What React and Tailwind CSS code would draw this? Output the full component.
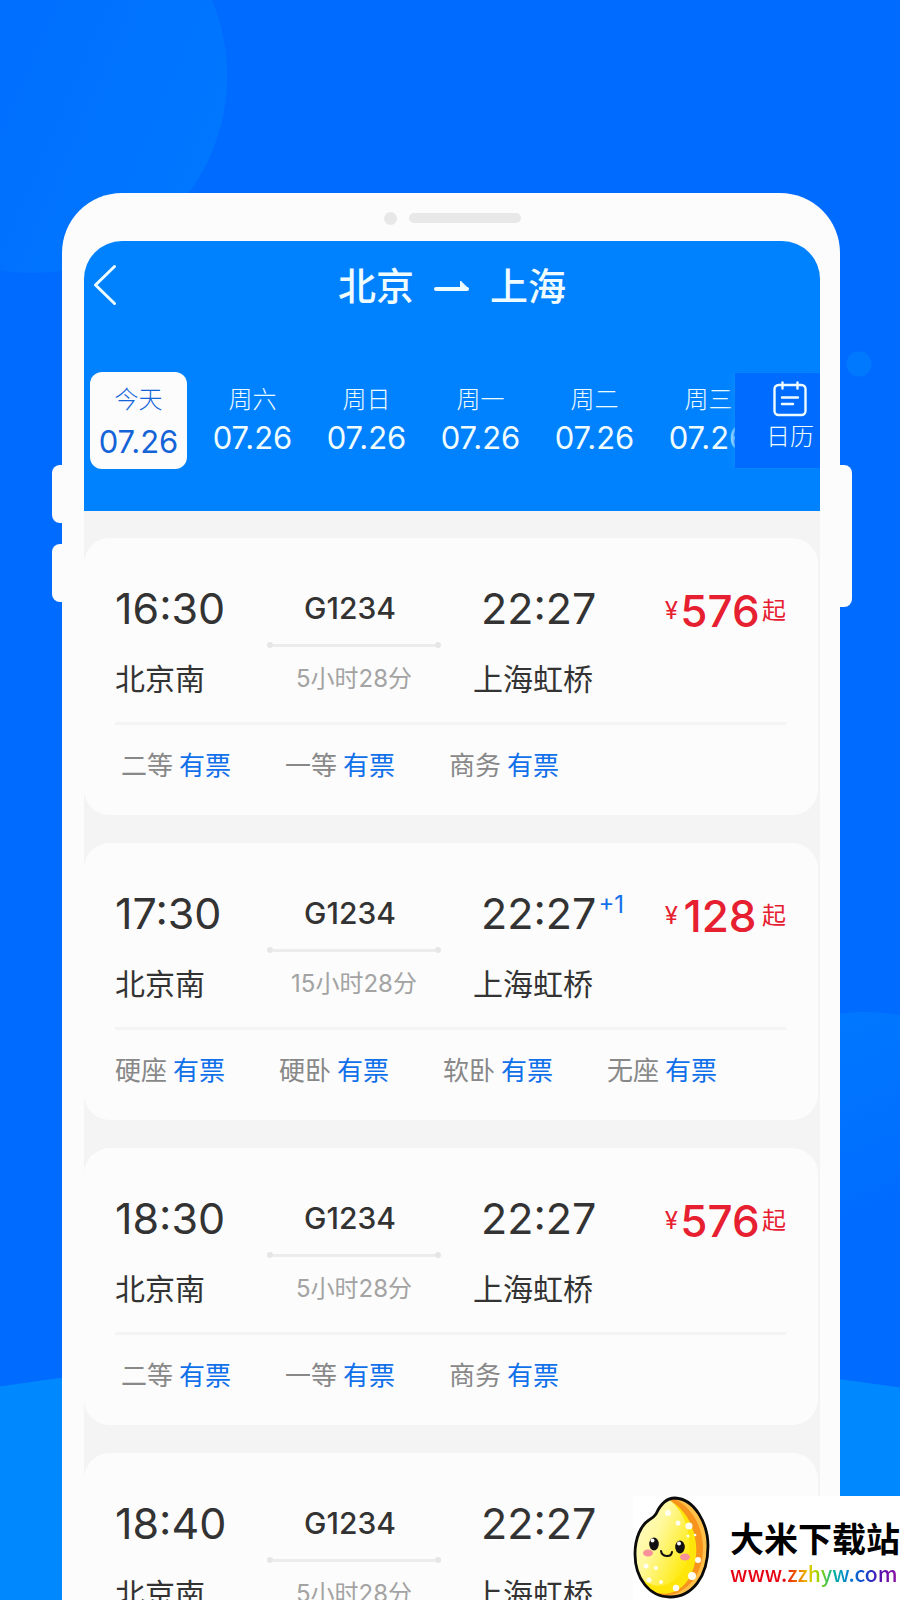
// src/pages/TrainList.jsx
import React, { useState } from 'react';

const days = [
  { id: 0, label: '今天', date: '07.26' },
  { id: 1, label: '周六', date: '07.26' },
  { id: 2, label: '周日', date: '07.26' },
  { id: 3, label: '周一', date: '07.26' },
  { id: 4, label: '周二', date: '07.26' },
  { id: 5, label: '周三', date: '07.26' },
];

const trains = [
  { depart: '16:30', arrive: '22:27', no: 'G1234', duration: '5小时28分', price: 576, seats: ['二等', '一等', '商务'] },
  { depart: '17:30', arrive: '22:27', plus: '+1', no: 'G1234', duration: '15小时28分', price: 128, seats: ['硬座', '硬卧', '软卧', '无座'] },
  { depart: '18:30', arrive: '22:27', no: 'G1234', duration: '5小时28分', price: 576, seats: ['二等', '一等', '商务'] },
  { depart: '18:40', arrive: '22:27', no: 'G1234', duration: '5小时28分', seats: ['二等', '一等', '商务'] },
];

// Soft circles behind the phone
const Backdrop = () => (
  <svg className="absolute inset-0 w-full h-full" viewBox="0 0 900 1600" preserveAspectRatio="none" aria-hidden="true">
    <defs>
      <linearGradient id="topGlow" x1="0.3" y1="0.3" x2="1" y2="0.6">
        <stop offset="0" stopColor="#006cff" />
        <stop offset="1" stopColor="#0077ff" />
      </linearGradient>
      <linearGradient id="sideGlow" x1="0.3" y1="0" x2="0.5" y2="0.5">
        <stop offset="0" stopColor="#0079ff" />
        <stop offset="1" stopColor="#006cff" />
      </linearGradient>
    </defs>
    <circle cx="30" cy="76" r="197" fill="url(#topGlow)" />
    <circle cx="859" cy="364" r="12.5" fill="#0079ff" />
    <circle cx="865" cy="1212" r="200" fill="url(#sideGlow)" />
    <circle cx="446" cy="4350" r="2997" fill="#0088ff" />
  </svg>
);

const CalendarIcon = () => (
  <svg className="w-9 h-9" viewBox="0 0 36 36" fill="none" stroke="currentColor" strokeWidth="2.4" strokeLinecap="round" aria-hidden="true">
    <path d="M10.500 4H6.500a4 4 0 0 0-4 4v22a4 4 0 0 0 4 4h23a4 4 0 0 0 4-4V8a4 4 0 0 0-4-4h-4M10.500 4h15" />
    <path d="M10.500 1.500v6M25.500 1.500v6M10 16.500h16M10 23h11" />
  </svg>
);

const Header = () => {
  const [active, setActive] = useState(0);

  return (
    <header className="h-[270px] bg-[#0082ff] text-[#effcff]">
      <div className="grid grid-cols-[60px_1fr_60px] items-center pt-[22px]">
        <button type="button" aria-label="返回" className="pl-2.5">
          <svg className="w-6 h-11" viewBox="0 0 24 44" fill="none" stroke="currentColor" strokeWidth="3" strokeLinecap="round" strokeLinejoin="round" aria-hidden="true">
            <path d="M20.500 2.500 1.500 21l19 18.500" />
          </svg>
        </button>
        <h1 className="flex items-center justify-center gap-5 text-[38px] leading-[46px] font-medium">
          <span>北京</span>
          <svg className="w-9 h-4" viewBox="0 0 36 16" aria-hidden="true">
            <path d="M2 11h31" stroke="currentColor" strokeWidth="4" strokeLinecap="round" />
            <path d="M26.500 3v8H34.500z" fill="currentColor" stroke="currentColor" strokeWidth="1" strokeLinejoin="round" />
          </svg>
          <span>上海</span>
        </h1>
      </div>

      <div className="relative mt-[63px] overflow-hidden">
        <div className="flex gap-[17px] pl-1.5">
          {days.map((day) => (
            <button
              key={day.id}
              type="button"
              onClick={() => setActive(day.id)}
              className={
                active === day.id
                  ? 'shrink-0 w-[97px] h-[97px] rounded-xl bg-[#fcfcfc] text-[#1464d8] flex flex-col items-center pt-4'
                  : 'shrink-0 w-[97px] h-[97px] flex flex-col items-center pt-4'
              }
            >
              <span className="text-2xl leading-6 font-light">{day.label}</span>
              <span className={active === day.id ? 'mt-3.5 text-[31px] leading-8' : 'mt-2.5 text-[31px] leading-8'}>
                {day.date}
              </span>
            </button>
          ))}
        </div>
        <button
          type="button"
          className="absolute right-0 top-px w-[85px] h-[95px] pl-[25px] pt-2 bg-[#006cff] flex flex-col items-center shadow-[-2px_0_8px_#0a8cff]"
        >
          <CalendarIcon />
          <span className="mt-2 text-2xl leading-6 font-light">日历</span>
        </button>
      </div>
    </header>
  );
};

const TrainCard = ({ train }) => (
  <li className="mr-0.5 h-[277px] rounded-[26px] bg-[#fcfcfc] pl-[31px] pr-8 pt-12 text-[#333333]">
    <div className="flex">
      <div className="w-[152px]">
        <p className="text-[43px] leading-[44px]">{train.depart}</p>
        <p className="mt-[34px] text-3xl leading-[30px]">北京南</p>
      </div>
      <div className="w-[174px] flex flex-col items-center">
        <p className="pr-2 text-3xl leading-[44px] font-medium">{train.no}</p>
        <div className="mt-3 w-full flex items-center" aria-hidden="true">
          <span className="w-1.5 h-1.5 rounded-full bg-[#e6e6e6]" />
          <span className="flex-1 h-[3px] bg-[#ececec]" />
          <span className="w-1.5 h-1.5 rounded-full bg-[#e6e6e6]" />
        </div>
        <p className="mt-4 text-2xl leading-[30px] text-[#a3a3a3]">{train.duration}</p>
      </div>
      <div className="ml-8 flex-1">
        <p className="flex pl-2 text-[43px] leading-[44px]">
          {train.arrive}
          {train.plus && <sup className="top-0 pl-0.5 text-2xl leading-7 text-[#1470ea]">{train.plus}</sup>}
        </p>
        <p className="mt-[34px] text-3xl leading-[30px]">上海虹桥</p>
      </div>
      {train.price && (
        <p className="flex h-[50px] items-center text-2xl text-[#e62030]">
          ¥
          <span className="w-[84px] text-center text-[44px] leading-[50px] font-medium">{train.price}</span>
          起
        </p>
      )}
    </div>

    <ul className={train.seats.length < 4 ? 'mt-7 border-t-3 border-[#f4f4f4] flex gap-[54px] pt-7 pl-1.5' : 'mt-7 border-t-3 border-[#f4f4f4] flex gap-[54px] pt-7'}>
      {train.seats.map((seat) => (
        <li key={seat} className="flex gap-1.5 text-[26px] leading-[26px] text-[#888888]">
          {seat}
          <a href="#book" className="text-[#1070ea]">有票</a>
        </li>
      ))}
    </ul>
  </li>
);

// Rice grain mascot
const RiceLogo = () => (
  <svg className="w-[78px] h-[104px] shrink-0" viewBox="0 0 78 104" aria-hidden="true">
    <defs>
      <linearGradient id="grain" x1="0.1" y1="0.1" x2="0.9" y2="0.8">
        <stop offset="0" stopColor="#fffcd8" />
        <stop offset="0.5" stopColor="#fff9a0" />
        <stop offset="1" stopColor="#ffea10" />
      </linearGradient>
      <clipPath id="grainShape">
        <path d="M23 18C28 7 34 2 42 2c20 1 33 26 33 48 0 31-16 51-38 51C16 101 2 82 2 58c0-16 6-29 14-34 3-2 5-3 7-6z" />
      </clipPath>
    </defs>
    <g clipPath="url(#grainShape)">
      <path d="M0 0h78v104H0z" fill="#ffc04a" />
      <path d="M42 3c16 8 28 27 28 49 0 21-9 38-28 46l-42 6V0z" fill="#f7941d" />
      <ellipse cx="28" cy="50" rx="35" ry="48" fill="#ffe60a" transform="rotate(-8 28 50)" />
      <ellipse cx="23" cy="44" rx="33" ry="46" fill="url(#grain)" transform="rotate(-8 23 44)" />
      <g fill="#fffef0">
        <circle cx="56" cy="30" r="3.5" />
        <circle cx="55" cy="40" r="1.500" />
        <circle cx="62" cy="39" r="1.300" />
        <circle cx="65" cy="64" r="3" />
        <circle cx="59" cy="80" r="4" />
        <circle cx="43" cy="92" r="3.200" />
        <circle cx="16" cy="84" r="2.500" />
        <circle cx="28" cy="86" r="2" />
        <circle cx="35" cy="17" r="3" />
        <circle cx="45" cy="27" r="2.500" />
        <circle cx="13" cy="70" r="2.500" />
        <circle cx="23" cy="72" r="2" />
      </g>
    </g>
    <path d="M23 18C28 7 34 2 42 2c20 1 33 26 33 48 0 31-16 51-38 51C16 101 2 82 2 58c0-16 6-29 14-34 3-2 5-3 7-6z" fill="none" stroke="#0b0b0b" strokeWidth="2.800" />
    <ellipse cx="15" cy="57" rx="5" ry="3.500" fill="#f9919a" />
    <ellipse cx="52" cy="61" rx="5" ry="3.500" fill="#f9919a" />
    <ellipse cx="21" cy="48" rx="4.800" ry="6.500" fill="#111111" />
    <ellipse cx="47" cy="51" rx="4.800" ry="6.500" fill="#111111" />
    <circle cx="19.500" cy="44.500" r="2" fill="#ffffff" />
    <circle cx="46" cy="47.500" r="2" fill="#ffffff" />
    <path d="M28 55c1 6 10 7 11 1" fill="none" stroke="#111111" strokeWidth="2" strokeLinecap="round" />
  </svg>
);

const SiteBadge = () => (
  <div className="absolute right-0 bottom-0 h-[104px] bg-white flex items-start gap-[19px]">
    <RiceLogo />
    <div className="pt-[26px]">
      <p className="text-[34px] leading-9 font-bold text-black whitespace-nowrap">大米下载站</p>
      <a
        href="#site"
        className="block w-fit font-['Noto_Sans_CJK_SC',sans-serif] text-[21px] leading-[30px] font-medium text-transparent bg-clip-text bg-[linear-gradient(90deg,#e60012_0%,#e60012_32%,#f06a00_40%,#e8c800_47%,#8fd400_54%,#00b4a0_62%,#0078d8_72%,#1840c8_82%,#5a10b0_90%,#8a10a0_100%)]"
      >
        www.zzhyw.com
      </a>
    </div>
  </div>
);

export default function App() {
  return (
    <div className="relative h-screen overflow-hidden bg-[#006cff] font-['Inter','Noto_Sans_CJK_SC',sans-serif]">
      <Backdrop />

      <div className="relative ml-[62px] mr-[60px] mt-[193px] rounded-t-[60px] bg-[#fcfcfc] pl-[22px] pr-5">
        {/* side keys */}
        <span className="absolute right-full top-[272px] w-2.5 h-[58px] rounded-l-lg bg-[#fcfcfc]" />
        <span className="absolute right-full top-[351px] w-2.5 h-[58px] rounded-l-lg bg-[#fcfcfc]" />
        <span className="absolute left-full top-[272px] w-3 h-[142px] rounded-r-lg bg-[#fcfcfc]" />

        <div className="h-12 flex items-center justify-center gap-3 pt-0.5">
          <span className="w-[13px] h-[13px] rounded-full bg-[#e8e8e8]" />
          <span className="w-[112px] h-2.5 rounded-full bg-[#e8e8e8]" />
        </div>

        <main className="overflow-hidden rounded-t-[38px] bg-[#f4f4f4]">
          <Header />
          <ul className="flex flex-col gap-7 pt-[27px]">
            {trains.map((train) => (
              <TrainCard key={train.depart} train={train} />
            ))}
          </ul>
        </main>
      </div>

      <SiteBadge />
    </div>
  );
}
